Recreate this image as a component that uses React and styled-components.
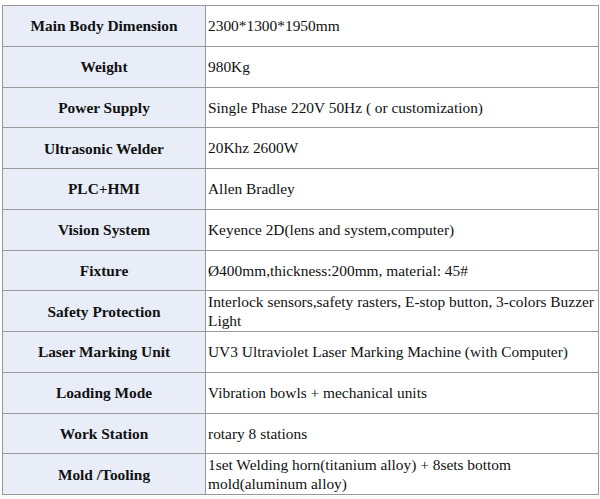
import styled, { createGlobalStyle } from "styled-components";

const GlobalStyle = createGlobalStyle`
  html, body {
    margin: 0;
    padding: 0;
    background: #fff;
  }
`;

const specs = [
  ["Main Body Dimension", "2300*1300*1950mm"],
  ["Weight", "980Kg"],
  ["Power Supply", "Single Phase 220V 50Hz ( or customization)"],
  ["Ultrasonic Welder", "20Khz 2600W"],
  ["PLC+HMI", "Allen Bradley"],
  ["Vision System", "Keyence 2D(lens and system,computer)"],
  ["Fixture", "Ø400mm,thickness:200mm, material: 45#"],
  ["Safety Protection", "Interlock sensors,safety rasters, E-stop button, 3-colors Buzzer Light"],
  ["Laser Marking Unit", "UV3 Ultraviolet Laser Marking Machine (with Computer)"],
  ["Loading Mode", "Vibration bowls + mechanical units"],
  ["Work Station", "rotary 8 stations"],
  ["Mold /Tooling", "1set Welding horn(titanium alloy) + 8sets bottom mold(aluminum alloy)"],
];

const Page = styled.div`
  padding: 5px 0 0 2px;
`;

const SpecTable = styled.table`
  width: 597px;
  border-collapse: collapse;
  table-layout: fixed;
  font-family: "Liberation Serif", "Times New Roman", serif;
  font-size: 15.4px;
  color: #111;
`;

const Row = styled.tr`
  height: 40.75px;
`;

const Label = styled.td`
  width: 203px;
  box-sizing: border-box;
  border: 1px solid #999;
  background: #e8edf8;
  font-weight: bold;
  text-align: center;
  vertical-align: middle;
  padding: 0 2px;
  line-height: 19px;
`;

const Value = styled.td`
  border: 1px solid #999;
  text-align: left;
  vertical-align: middle;
  padding: 0 0 0 2px;
  line-height: 19.5px;
`;

export default function App() {
  return (
    <>
      <GlobalStyle />
      <Page>
        <SpecTable>
          <tbody>
            {specs.map(([label, value]) => (
              <Row key={label}>
                <Label>{label}</Label>
                <Value>{value}</Value>
              </Row>
            ))}
          </tbody>
        </SpecTable>
      </Page>
    </>
  );
}
